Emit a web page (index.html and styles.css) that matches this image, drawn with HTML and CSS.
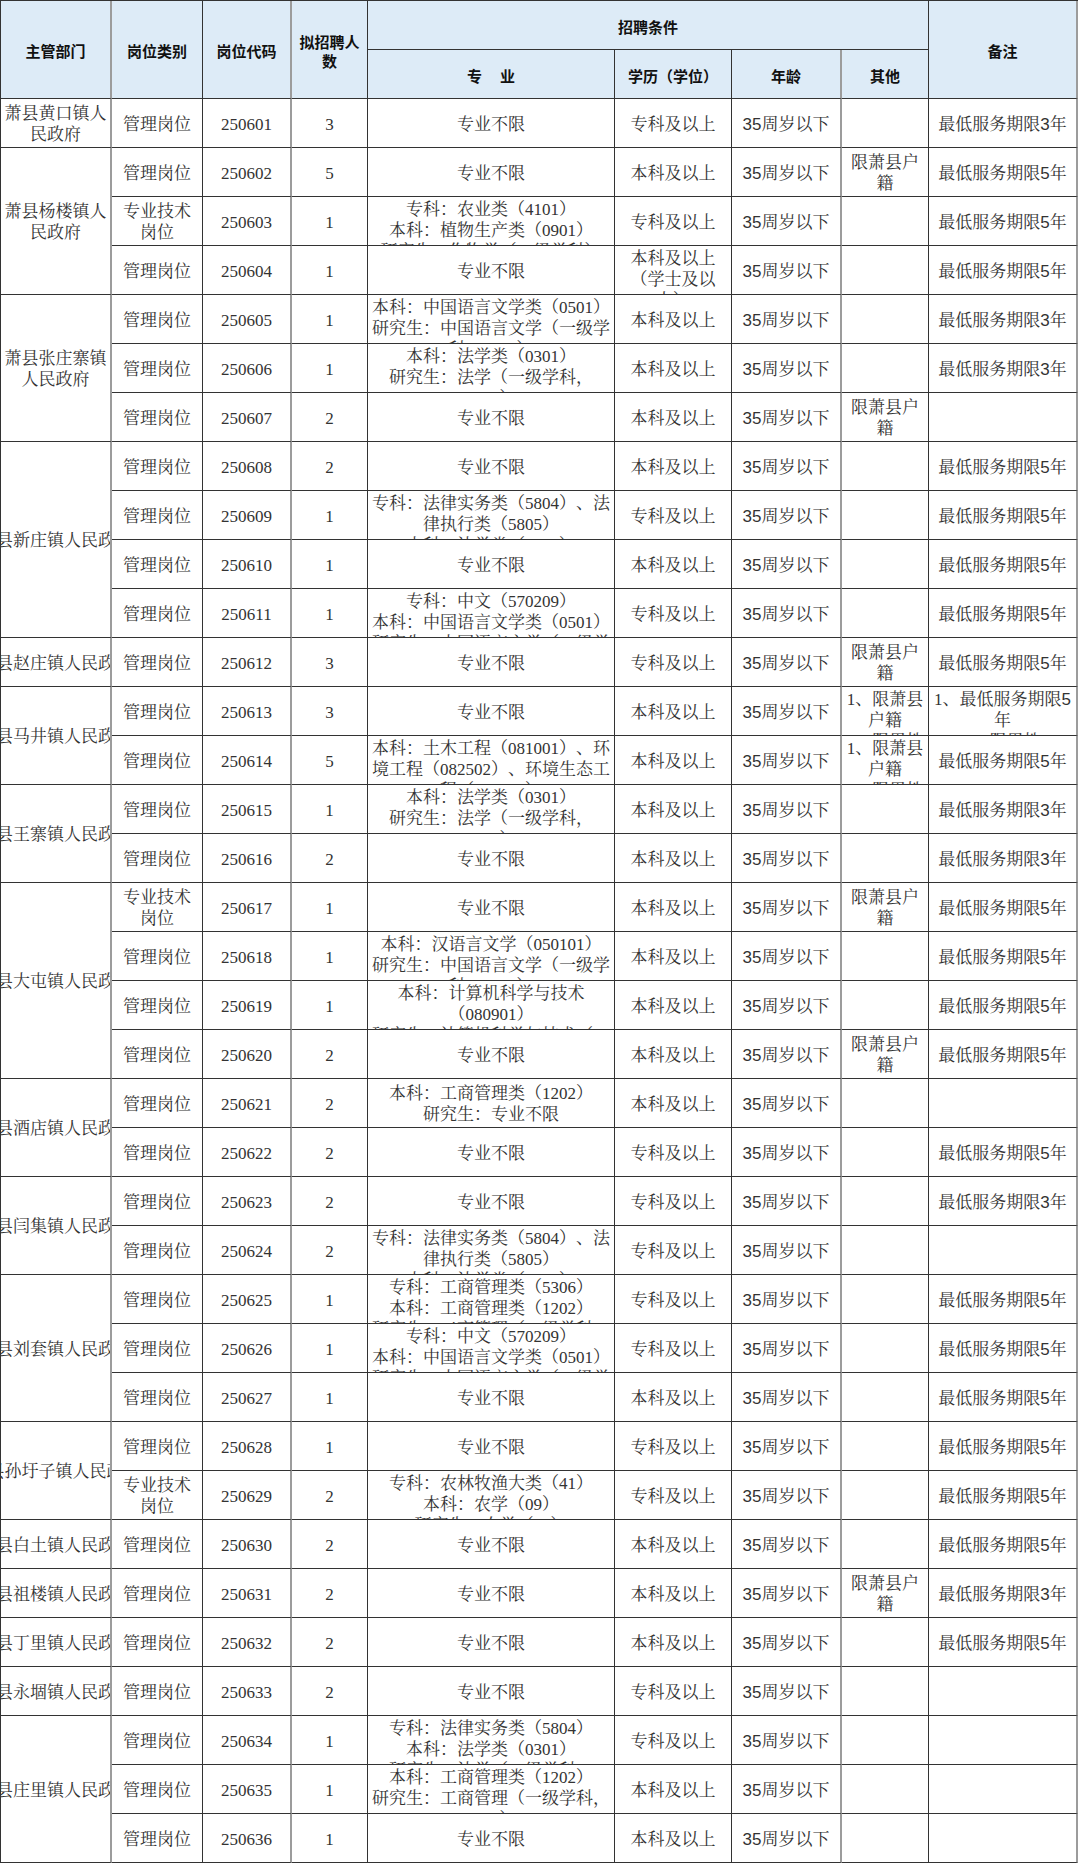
FILE: index.html
```html
<!DOCTYPE html>
<html lang="zh-CN">
<head>
<meta charset="utf-8">
<title>招聘岗位表</title>
<link rel="stylesheet" href="styles.css">
</head>
<body>
<div class="sheet">
  <div class="c h g rs2"><span>主管部门</span></div>
  <div class="c h rs2"><span>岗位类别</span></div>
  <div class="c h g rs2"><span>岗位代码</span></div>
  <div class="c h rs2"><span>拟招聘人<br>数</span></div>
  <div class="c h cs4"><span>招聘条件</span></div>
  <div class="c h g rs2"><span>备注</span></div>
  <div class="c h"><span>专<i class="sp"></i>业</span></div>
  <div class="c h"><span>学历（学位）</span></div>
  <div class="c h g"><span>年龄</span></div>
  <div class="c h"><span>其他</span></div>

  <!-- 250601 -->
  <div class="c g"><span>萧县黄口镇人<br>民政府</span></div>
  <div class="c"><span>管理岗位</span></div><div class="c g"><span>250601</span></div><div class="c"><span>3</span></div>
  <div class="c"><span>专业不限</span></div><div class="c"><span>专科及以上</span></div><div class="c g s"><span>35周岁以下</span></div><div class="c"><span></span></div><div class="c g s"><span>最低服务期限3年</span></div>

  <!-- 250602-250604 -->
  <div class="c g rs3"><span>萧县杨楼镇人<br>民政府</span></div>
  <div class="c"><span>管理岗位</span></div><div class="c g"><span>250602</span></div><div class="c"><span>5</span></div>
  <div class="c"><span>专业不限</span></div><div class="c"><span>本科及以上</span></div><div class="c g s"><span>35周岁以下</span></div><div class="c"><span>限萧县户<br>籍</span></div><div class="c g s"><span>最低服务期限5年</span></div>

  <div class="c"><span>专业技术<br>岗位</span></div><div class="c g"><span>250603</span></div><div class="c"><span>1</span></div>
  <div class="c"><span>专科：农业类（4101）<br>本科：植物生产类（0901）<br>研究生：作物学（一级学科）</span></div><div class="c"><span>专科及以上</span></div><div class="c g s"><span>35周岁以下</span></div><div class="c"><span></span></div><div class="c g s"><span>最低服务期限5年</span></div>

  <div class="c"><span>管理岗位</span></div><div class="c g"><span>250604</span></div><div class="c"><span>1</span></div>
  <div class="c"><span>专业不限</span></div><div class="c"><span>本科及以上（学士及以上）</span></div><div class="c g s"><span>35周岁以下</span></div><div class="c"><span></span></div><div class="c g s"><span>最低服务期限5年</span></div>

  <!-- 250605-250607 -->
  <div class="c g rs3"><span>萧县张庄寨镇<br>人民政府</span></div>
  <div class="c"><span>管理岗位</span></div><div class="c g"><span>250605</span></div><div class="c"><span>1</span></div>
  <div class="c"><span>本科：中国语言文学类（0501）<br>研究生：中国语言文学（一级学科，0501）</span></div><div class="c"><span>本科及以上</span></div><div class="c g s"><span>35周岁以下</span></div><div class="c"><span></span></div><div class="c g s"><span>最低服务期限3年</span></div>

  <div class="c"><span>管理岗位</span></div><div class="c g"><span>250606</span></div><div class="c"><span>1</span></div>
  <div class="c"><span>本科：法学类（0301）<br>研究生：法学（一级学科，0301）</span></div><div class="c"><span>本科及以上</span></div><div class="c g s"><span>35周岁以下</span></div><div class="c"><span></span></div><div class="c g s"><span>最低服务期限3年</span></div>

  <div class="c"><span>管理岗位</span></div><div class="c g"><span>250607</span></div><div class="c"><span>2</span></div>
  <div class="c"><span>专业不限</span></div><div class="c"><span>本科及以上</span></div><div class="c g s"><span>35周岁以下</span></div><div class="c"><span>限萧县户<br>籍</span></div><div class="c g s"><span></span></div>

  <!-- 250608-250611 -->
  <div class="c g nw rs4"><span>萧县新庄镇人民政府</span></div>
  <div class="c"><span>管理岗位</span></div><div class="c g"><span>250608</span></div><div class="c"><span>2</span></div>
  <div class="c"><span>专业不限</span></div><div class="c"><span>本科及以上</span></div><div class="c g s"><span>35周岁以下</span></div><div class="c"><span></span></div><div class="c g s"><span>最低服务期限5年</span></div>

  <div class="c"><span>管理岗位</span></div><div class="c g"><span>250609</span></div><div class="c"><span>1</span></div>
  <div class="c"><span>专科：法律实务类（5804）、法律执行类（5805）<br>本科：法学类（0301）</span></div><div class="c"><span>专科及以上</span></div><div class="c g s"><span>35周岁以下</span></div><div class="c"><span></span></div><div class="c g s"><span>最低服务期限5年</span></div>

  <div class="c"><span>管理岗位</span></div><div class="c g"><span>250610</span></div><div class="c"><span>1</span></div>
  <div class="c"><span>专业不限</span></div><div class="c"><span>本科及以上</span></div><div class="c g s"><span>35周岁以下</span></div><div class="c"><span></span></div><div class="c g s"><span>最低服务期限5年</span></div>

  <div class="c"><span>管理岗位</span></div><div class="c g"><span>250611</span></div><div class="c"><span>1</span></div>
  <div class="c"><span>专科：中文（570209）<br>本科：中国语言文学类（0501）<br>研究生：中国语言文学（一级学科，0501）</span></div><div class="c"><span>专科及以上</span></div><div class="c g s"><span>35周岁以下</span></div><div class="c"><span></span></div><div class="c g s"><span>最低服务期限5年</span></div>

  <!-- 250612 -->
  <div class="c g nw"><span>萧县赵庄镇人民政府</span></div>
  <div class="c"><span>管理岗位</span></div><div class="c g"><span>250612</span></div><div class="c"><span>3</span></div>
  <div class="c"><span>专业不限</span></div><div class="c"><span>专科及以上</span></div><div class="c g s"><span>35周岁以下</span></div><div class="c"><span>限萧县户<br>籍</span></div><div class="c g s"><span>最低服务期限5年</span></div>

  <!-- 250613-250614 -->
  <div class="c g nw rs2"><span>萧县马井镇人民政府</span></div>
  <div class="c"><span>管理岗位</span></div><div class="c g"><span>250613</span></div><div class="c"><span>3</span></div>
  <div class="c"><span>专业不限</span></div><div class="c"><span>本科及以上</span></div><div class="c g s"><span>35周岁以下</span></div><div class="c"><span>1、限萧县户籍<br>2、限男性</span></div><div class="c g s"><span><b class="sr">1</b>、最低服务期限5年<br><b class="sr">2</b>、限男性</span></div>

  <div class="c"><span>管理岗位</span></div><div class="c g"><span>250614</span></div><div class="c"><span>5</span></div>
  <div class="c"><span>本科：土木工程（081001）、环境工程（082502）、环境生态工程（082503）</span></div><div class="c"><span>本科及以上</span></div><div class="c g s"><span>35周岁以下</span></div><div class="c"><span>1、限萧县户籍<br>2、限男性</span></div><div class="c g s"><span>最低服务期限5年</span></div>

  <!-- 250615-250616 -->
  <div class="c g nw rs2"><span>萧县王寨镇人民政府</span></div>
  <div class="c"><span>管理岗位</span></div><div class="c g"><span>250615</span></div><div class="c"><span>1</span></div>
  <div class="c"><span>本科：法学类（0301）<br>研究生：法学（一级学科，0301）</span></div><div class="c"><span>本科及以上</span></div><div class="c g s"><span>35周岁以下</span></div><div class="c"><span></span></div><div class="c g s"><span>最低服务期限3年</span></div>

  <div class="c"><span>管理岗位</span></div><div class="c g"><span>250616</span></div><div class="c"><span>2</span></div>
  <div class="c"><span>专业不限</span></div><div class="c"><span>本科及以上</span></div><div class="c g s"><span>35周岁以下</span></div><div class="c"><span></span></div><div class="c g s"><span>最低服务期限3年</span></div>

  <!-- 250617-250620 -->
  <div class="c g nw rs4"><span>萧县大屯镇人民政府</span></div>
  <div class="c"><span>专业技术<br>岗位</span></div><div class="c g"><span>250617</span></div><div class="c"><span>1</span></div>
  <div class="c"><span>专业不限</span></div><div class="c"><span>本科及以上</span></div><div class="c g s"><span>35周岁以下</span></div><div class="c"><span>限萧县户<br>籍</span></div><div class="c g s"><span>最低服务期限5年</span></div>

  <div class="c"><span>管理岗位</span></div><div class="c g"><span>250618</span></div><div class="c"><span>1</span></div>
  <div class="c"><span>本科：汉语言文学（050101）<br>研究生：中国语言文学（一级学科，0501）</span></div><div class="c"><span>本科及以上</span></div><div class="c g s"><span>35周岁以下</span></div><div class="c"><span></span></div><div class="c g s"><span>最低服务期限5年</span></div>

  <div class="c"><span>管理岗位</span></div><div class="c g"><span>250619</span></div><div class="c"><span>1</span></div>
  <div class="c"><span>本科：计算机科学与技术（080901）<br>研究生：计算机科学与技术（一级学科，0812）</span></div><div class="c"><span>本科及以上</span></div><div class="c g s"><span>35周岁以下</span></div><div class="c"><span></span></div><div class="c g s"><span>最低服务期限5年</span></div>

  <div class="c"><span>管理岗位</span></div><div class="c g"><span>250620</span></div><div class="c"><span>2</span></div>
  <div class="c"><span>专业不限</span></div><div class="c"><span>本科及以上</span></div><div class="c g s"><span>35周岁以下</span></div><div class="c"><span>限萧县户<br>籍</span></div><div class="c g s"><span>最低服务期限5年</span></div>

  <!-- 250621-250622 -->
  <div class="c g nw rs2"><span>萧县酒店镇人民政府</span></div>
  <div class="c"><span>管理岗位</span></div><div class="c g"><span>250621</span></div><div class="c"><span>2</span></div>
  <div class="c"><span>本科：工商管理类（1202）<br>研究生：专业不限</span></div><div class="c"><span>本科及以上</span></div><div class="c g s"><span>35周岁以下</span></div><div class="c"><span></span></div><div class="c g s"><span></span></div>

  <div class="c"><span>管理岗位</span></div><div class="c g"><span>250622</span></div><div class="c"><span>2</span></div>
  <div class="c"><span>专业不限</span></div><div class="c"><span>专科及以上</span></div><div class="c g s"><span>35周岁以下</span></div><div class="c"><span></span></div><div class="c g s"><span>最低服务期限5年</span></div>

  <!-- 250623-250624 -->
  <div class="c g nw rs2"><span>萧县闫集镇人民政府</span></div>
  <div class="c"><span>管理岗位</span></div><div class="c g"><span>250623</span></div><div class="c"><span>2</span></div>
  <div class="c"><span>专业不限</span></div><div class="c"><span>专科及以上</span></div><div class="c g s"><span>35周岁以下</span></div><div class="c"><span></span></div><div class="c g s"><span>最低服务期限3年</span></div>

  <div class="c"><span>管理岗位</span></div><div class="c g"><span>250624</span></div><div class="c"><span>2</span></div>
  <div class="c"><span>专科：法律实务类（5804）、法律执行类（5805）<br>本科：法学类（0301）</span></div><div class="c"><span>专科及以上</span></div><div class="c g s"><span>35周岁以下</span></div><div class="c"><span></span></div><div class="c g s"><span></span></div>

  <!-- 250625-250627 -->
  <div class="c g nw rs3"><span>萧县刘套镇人民政府</span></div>
  <div class="c"><span>管理岗位</span></div><div class="c g"><span>250625</span></div><div class="c"><span>1</span></div>
  <div class="c"><span>专科：工商管理类（5306）<br>本科：工商管理类（1202）<br>研究生：工商管理（一级学科，1202）</span></div><div class="c"><span>专科及以上</span></div><div class="c g s"><span>35周岁以下</span></div><div class="c"><span></span></div><div class="c g s"><span>最低服务期限5年</span></div>

  <div class="c"><span>管理岗位</span></div><div class="c g"><span>250626</span></div><div class="c"><span>1</span></div>
  <div class="c"><span>专科：中文（570209）<br>本科：中国语言文学类（0501）<br>研究生：中国语言文学（一级学科，0501）</span></div><div class="c"><span>专科及以上</span></div><div class="c g s"><span>35周岁以下</span></div><div class="c"><span></span></div><div class="c g s"><span>最低服务期限5年</span></div>

  <div class="c"><span>管理岗位</span></div><div class="c g"><span>250627</span></div><div class="c"><span>1</span></div>
  <div class="c"><span>专业不限</span></div><div class="c"><span>本科及以上</span></div><div class="c g s"><span>35周岁以下</span></div><div class="c"><span></span></div><div class="c g s"><span>最低服务期限5年</span></div>

  <!-- 250628-250629 -->
  <div class="c g nw rs2"><span>萧县孙圩子镇人民政府</span></div>
  <div class="c"><span>管理岗位</span></div><div class="c g"><span>250628</span></div><div class="c"><span>1</span></div>
  <div class="c"><span>专业不限</span></div><div class="c"><span>专科及以上</span></div><div class="c g s"><span>35周岁以下</span></div><div class="c"><span></span></div><div class="c g s"><span>最低服务期限5年</span></div>

  <div class="c"><span>专业技术<br>岗位</span></div><div class="c g"><span>250629</span></div><div class="c"><span>2</span></div>
  <div class="c"><span>专科：农林牧渔大类（41）<br>本科：农学（09）<br>研究生：农学（09）</span></div><div class="c"><span>专科及以上</span></div><div class="c g s"><span>35周岁以下</span></div><div class="c"><span></span></div><div class="c g s"><span>最低服务期限5年</span></div>

  <!-- 250630 -->
  <div class="c g nw"><span>萧县白土镇人民政府</span></div>
  <div class="c"><span>管理岗位</span></div><div class="c g"><span>250630</span></div><div class="c"><span>2</span></div>
  <div class="c"><span>专业不限</span></div><div class="c"><span>本科及以上</span></div><div class="c g s"><span>35周岁以下</span></div><div class="c"><span></span></div><div class="c g s"><span>最低服务期限5年</span></div>

  <!-- 250631 -->
  <div class="c g nw"><span>萧县祖楼镇人民政府</span></div>
  <div class="c"><span>管理岗位</span></div><div class="c g"><span>250631</span></div><div class="c"><span>2</span></div>
  <div class="c"><span>专业不限</span></div><div class="c"><span>本科及以上</span></div><div class="c g s"><span>35周岁以下</span></div><div class="c"><span>限萧县户<br>籍</span></div><div class="c g s"><span>最低服务期限3年</span></div>

  <!-- 250632 -->
  <div class="c g nw"><span>萧县丁里镇人民政府</span></div>
  <div class="c"><span>管理岗位</span></div><div class="c g"><span>250632</span></div><div class="c"><span>2</span></div>
  <div class="c"><span>专业不限</span></div><div class="c"><span>本科及以上</span></div><div class="c g s"><span>35周岁以下</span></div><div class="c"><span></span></div><div class="c g s"><span>最低服务期限5年</span></div>

  <!-- 250633 -->
  <div class="c g nw"><span>萧县永堌镇人民政府</span></div>
  <div class="c"><span>管理岗位</span></div><div class="c g"><span>250633</span></div><div class="c"><span>2</span></div>
  <div class="c"><span>专业不限</span></div><div class="c"><span>专科及以上</span></div><div class="c g s"><span>35周岁以下</span></div><div class="c"><span></span></div><div class="c g s"><span></span></div>

  <!-- 250634-250636 -->
  <div class="c g nw rs3"><span>萧县庄里镇人民政府</span></div>
  <div class="c"><span>管理岗位</span></div><div class="c g"><span>250634</span></div><div class="c"><span>1</span></div>
  <div class="c"><span>专科：法律实务类（5804）<br>本科：法学类（0301）<br>研究生：法学（一级学科，0301）</span></div><div class="c"><span>专科及以上</span></div><div class="c g s"><span>35周岁以下</span></div><div class="c"><span></span></div><div class="c g s"><span></span></div>

  <div class="c"><span>管理岗位</span></div><div class="c g"><span>250635</span></div><div class="c"><span>1</span></div>
  <div class="c"><span>本科：工商管理类（1202）<br>研究生：工商管理（一级学科，1202）</span></div><div class="c"><span>本科及以上</span></div><div class="c g s"><span>35周岁以下</span></div><div class="c"><span></span></div><div class="c g s"><span></span></div>

  <div class="c"><span>管理岗位</span></div><div class="c g"><span>250636</span></div><div class="c"><span>1</span></div>
  <div class="c"><span>专业不限</span></div><div class="c"><span>本科及以上</span></div><div class="c g s"><span>35周岁以下</span></div><div class="c"><span></span></div><div class="c g s"><span></span></div>
</div>
</body>
</html>
```

FILE: styles.css
```css
html, body {
  margin: 0;
  padding: 0;
  background: #ffffff;
}

body {
  font-family: "Liberation Serif", "Noto Serif CJK SC", "Noto Sans CJK SC", serif;
  font-size: 17px;
  color: #333333;
  text-spacing-trim: space-all;
}

.sheet {
  display: grid;
  grid-template-columns: 111px 91px 89px 76px 247px 117px 110px 87px 149px;
  grid-auto-rows: 49px;
  width: max-content;
  border-left: 1px solid #333333;
  border-top: 1px solid #333333;
}

.c {
  box-sizing: border-box;
  min-width: 0;
  min-height: 0;
  overflow: hidden;
  display: flex;
  flex-direction: column;
  padding: 2px 3px 0;
  border-right: 1px solid #333333;
  border-bottom: 1px solid #333333;
  text-align: center;
  line-height: 21px;
}

.c > span {
  margin: auto 0;
}

.g {
  border-right: 2px solid #9c9c9c;
}

.s {
  font-family: "Liberation Sans", "Noto Serif CJK SC", "Noto Sans CJK SC", sans-serif;
}

.sr {
  font-family: "Liberation Serif", serif;
  font-weight: normal;
}

.nw {
  flex-direction: row;
  justify-content: center;
  align-items: center;
  white-space: nowrap;
}

.nw > span {
  flex: none;
  margin: 0;
}

.h {
  background: #ddebf7;
  font-family: "Liberation Sans", "Noto Sans CJK SC", sans-serif;
  font-weight: bold;
  font-size: 15px;
  line-height: 19px;
  color: #111111;
  padding-top: 4px;
}

.sp {
  display: inline-block;
  width: 18px;
}

.rs2 { grid-row: span 2; }
.rs3 { grid-row: span 3; }
.rs4 { grid-row: span 4; }
.cs4 { grid-column: span 4; }
```
